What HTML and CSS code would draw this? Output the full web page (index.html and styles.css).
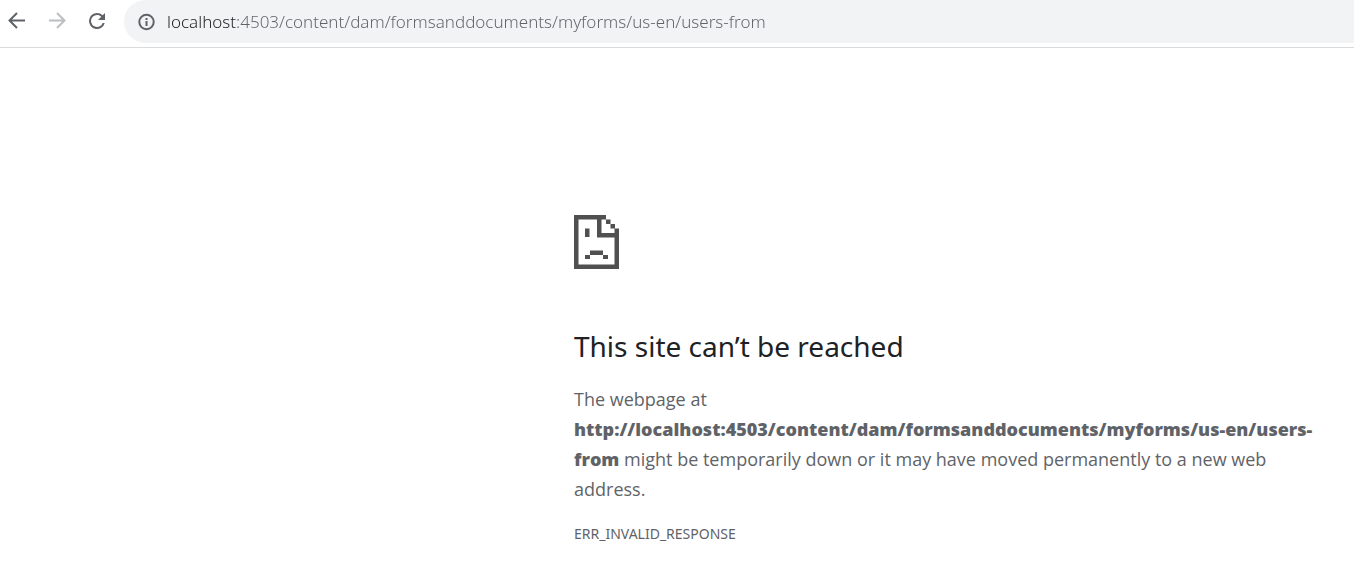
FILE: index.html
```html
<!DOCTYPE html>
<html lang="en">
<head>
<meta charset="utf-8">
<title>localhost</title>
<link rel="stylesheet" href="styles.css">
</head>
<body>
<header class="toolbar">
  <nav class="nav-buttons" aria-label="Navigation">
    <button class="nav-button" type="button" aria-label="Back">
      <svg width="24" height="24" viewBox="0 0 24 24" fill="none" stroke="currentColor" stroke-width="2"><path d="M20 11.500H5M12 4L4.500 11.500L12 19"/></svg>
    </button>
    <button class="nav-button" type="button" aria-label="Forward" disabled>
      <svg width="24" height="24" viewBox="0 0 24 24" fill="none" stroke="currentColor" stroke-width="2"><path d="M4 11.500H19M12 4L19.500 11.500L12 19"/></svg>
    </button>
    <button class="nav-button" type="button" aria-label="Reload">
      <svg width="24" height="24" viewBox="0 0 24 24" fill="currentColor"><path d="M17.650 6.350A7.960 7.960 0 0 0 12 4a8 8 0 1 0 7.730 10h-2.080A6 6 0 1 1 12 6c1.660 0 3.140.69 4.220 1.780L13 11h7V4z"/></svg>
    </button>
  </nav>
  <form class="omnibox">
    <button class="site-info" type="button" aria-label="View site information">
      <svg width="20" height="20" viewBox="0 0 20 20"><circle cx="10.500" cy="10" r="7.200" fill="none" stroke="currentColor" stroke-width="2"/><path d="M9.500 9h2v5h-2zM9.500 6h2v2h-2z" fill="currentColor"/></svg>
    </button>
    <input class="address" type="text" aria-label="Address bar" spellcheck="false" value="localhost:4503/content/dam/formsanddocuments/myforms/us-en/users-from">
  </form>
</header>
<main class="error-page">
  <svg class="sad-page" width="45" height="54" viewBox="0 0 45 54" fill="currentColor" aria-hidden="true">
    <path fill-rule="evenodd" d="M0 0H32V4.500H27.500V18H40.500V13.500H45V54H0ZM4.500 4.500V49.500H40.500V22.500H23V4.500Z"/>
    <path d="M32 4.500h4.500V9H32zM36.500 9H41v4.500h-4.500zM11 13.500h4.500V22H11zM16 35.500h13V40H16zM11 40h5v4h-5zM29 40h5v4h-5z"/>
  </svg>
  <h1 class="title">This site can’t be reached</h1>
  <p class="message">The webpage at <strong class="url">http://localhost:4503/content/dam/formsanddocuments/myforms/us-en/users-from</strong> might be temporarily down or it may have moved permanently to a new web address.</p>
  <p class="error-code">ERR_INVALID_RESPONSE</p>
</main>
</body>
</html>
```
FILE: styles.css
```css
body {
  margin: 0;
  background: #fff;
  color: #5f6368;
  font-family: "Open Sans", "Noto Sans", sans-serif;
}

button {
  display: flex;
  padding: 0;
  border: 0;
  background: none;
  color: inherit;
}

.toolbar {
  display: flex;
  align-items: flex-start;
  gap: 15px;
  padding: 0 0 4px 5px;
  border-bottom: 1px solid #d9dadc;
}

.nav-buttons {
  display: flex;
  gap: 16px;
  padding-top: 9px;
}

.nav-button:disabled {
  color: #bcbec0;
}

.omnibox {
  display: flex;
  flex: 1;
  align-items: center;
  gap: 11px;
  height: 43px;
  padding-left: 12px;
  border-radius: 22px 0 0 22px;
  background: #f1f3f4;
}

/* The host name is darker than the rest of the address. */
.address {
  flex: 1;
  min-width: 0;
  padding: 0;
  border: 0;
  outline: 0;
  background: linear-gradient(to right, #202124 70px, #5f6368 70px);
  background-clip: text;
  color: transparent;
  caret-color: #202124;
  font: 300 17px/24px "Noto Sans", sans-serif;
}

.error-page {
  max-width: 750px;
  margin-left: 574px;
  padding-top: 167px;
}

.sad-page {
  display: block;
  color: #505050;
}

.title {
  margin: 58px 0 19px;
  color: #202124;
  font-family: "Noto Sans", sans-serif;
  font-size: 28px;
  font-weight: 400;
  line-height: 38px;
}

.message {
  margin: 0;
  font-size: 18px;
  line-height: 30px;
}

.url {
  font-weight: 800;
}

.error-code {
  margin: 20px 0 0;
  font-family: "Noto Sans", sans-serif;
  font-size: 14px;
  line-height: 20px;
}
```
